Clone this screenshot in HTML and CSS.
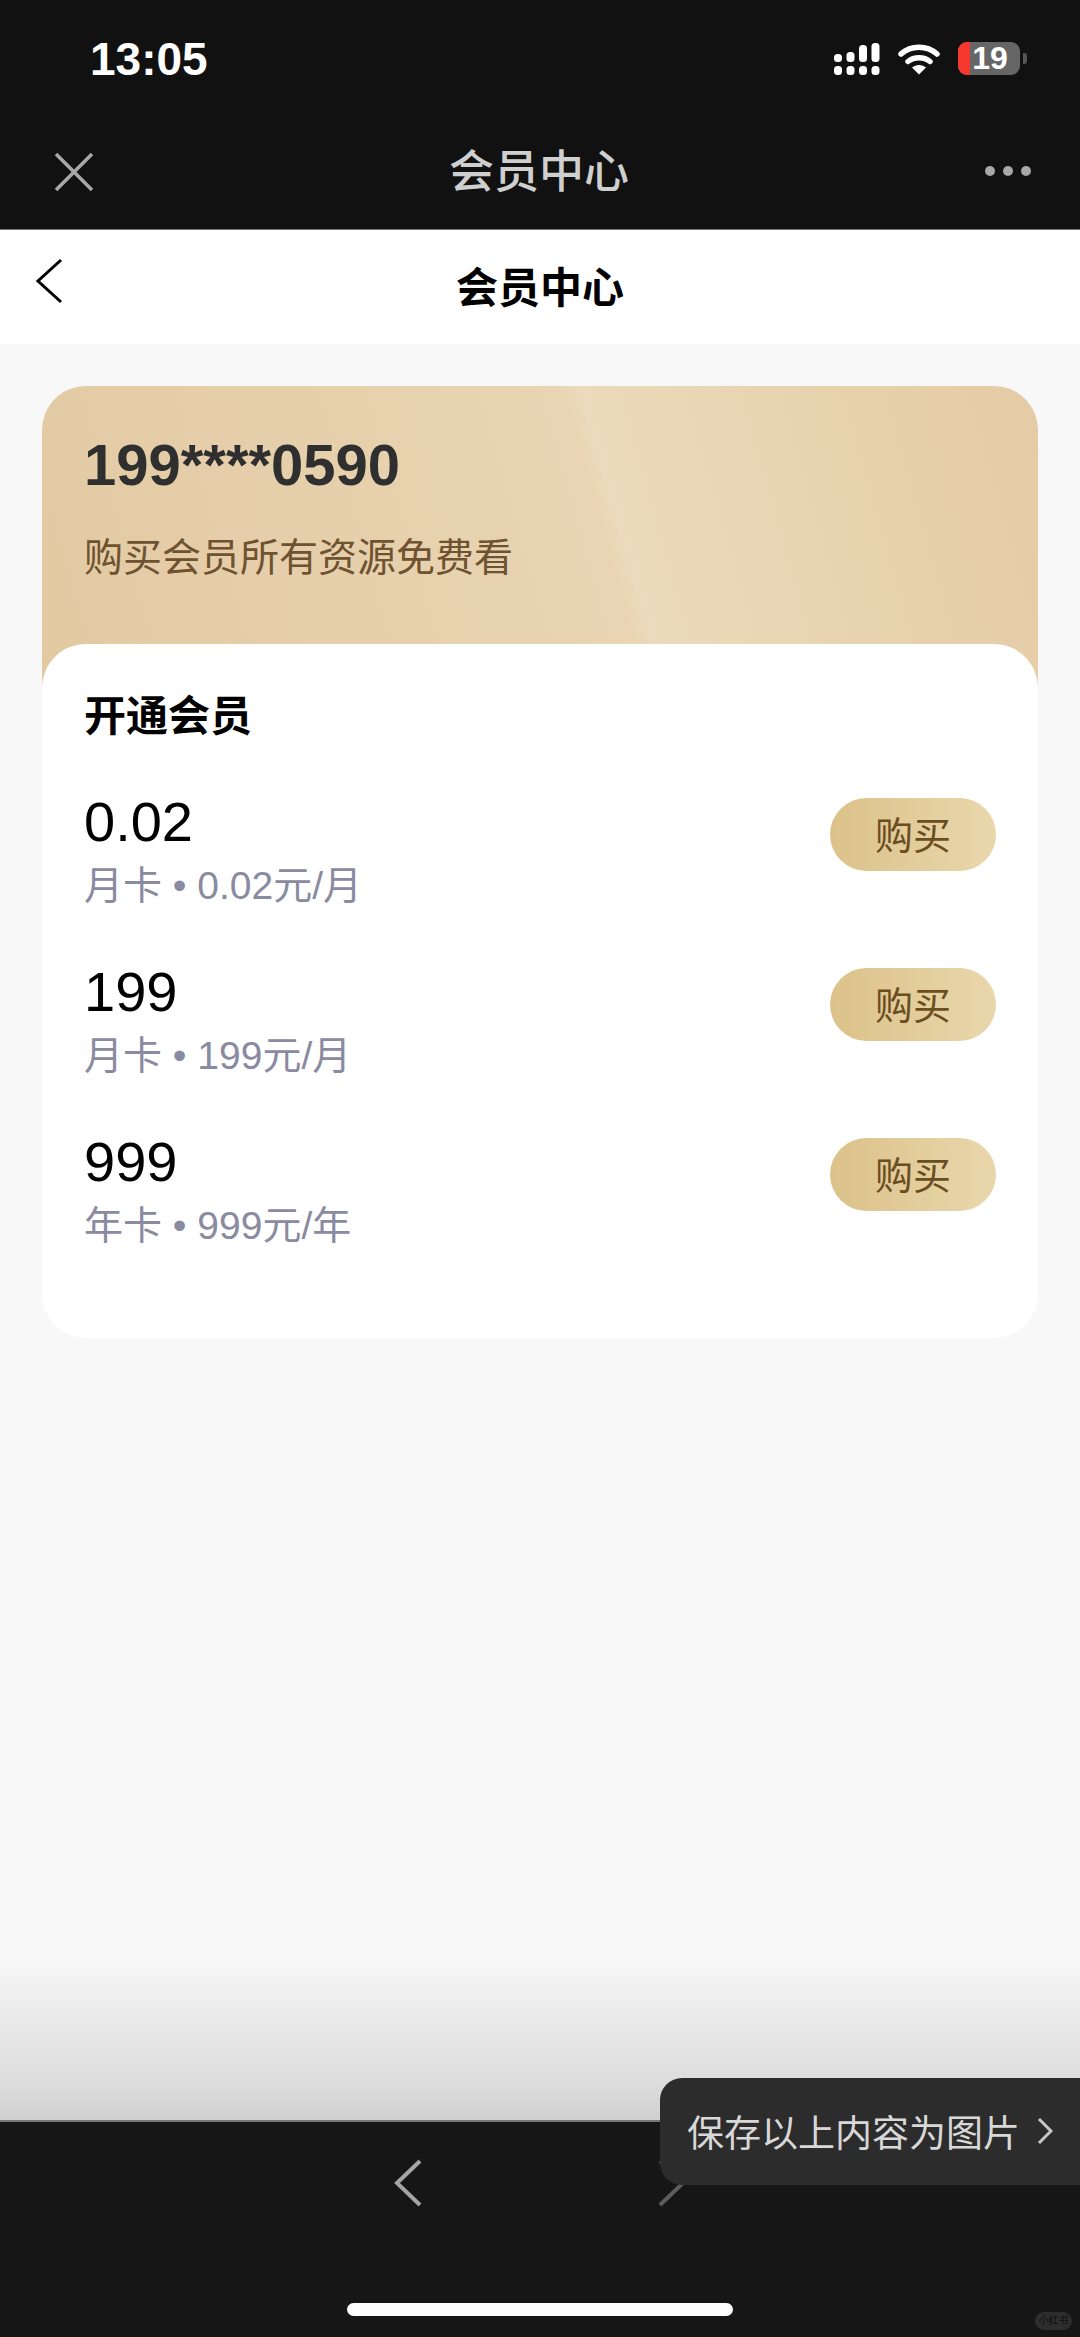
FILE: index.html
```html
<!DOCTYPE html>
<html lang="zh-CN">
   <head>
      <meta charset="UTF-8" />
      <meta name="viewport" content="width=device-width, initial-scale=1.0" />
      <title>会员中心</title>
      <link rel="stylesheet" href="styles.css">
   </head>
   <body>
      <div class="phone">
         <div class="status-bar">
            <span class="time">13:05</span>
            <div class="status-icons">
               <svg class="signal" width="46" height="34" viewBox="0 0 46 34">
                  <g fill="#fff">
                     <rect x="0" y="12" width="8" height="8" rx="3.5" />
                     <rect x="12.5" y="10" width="8" height="10" rx="3.5" />
                     <rect x="25" y="3" width="8" height="17" rx="3.5" />
                     <rect x="37.5" y="1" width="8" height="19" rx="3.5" />
                     <rect x="0" y="24" width="8" height="9" rx="3.5" />
                     <rect x="12.5" y="24" width="8" height="9" rx="3.5" />
                     <rect x="25" y="24" width="8" height="9" rx="3.5" />
                     <rect x="37.5" y="24" width="8" height="9" rx="3.5" />
                  </g>
               </svg>
               <svg class="wifi" width="42" height="32" viewBox="0 0 42 32">
                  <path d="M3 11 C13 2 29 2 39 11" fill="none" stroke="#fff" stroke-width="5.5" stroke-linecap="round" />
                  <path d="M10 18.5 C16 13.5 26 13.5 32 18.5" fill="none" stroke="#fff" stroke-width="5.5" stroke-linecap="round" />
                  <path d="M14 24.5 C18 21 24 21 28 24.5 L21 31.5 Z" fill="#fff" />
               </svg>
               <div class="battery">
                  <div class="battery-level"></div>
                  <span class="battery-num">19</span>
               </div>
               <div class="battery-tip"></div>
            </div>
         </div>

         <header class="app-bar">
            <svg class="icon-close" width="40" height="40" viewBox="0 0 40 40">
               <path d="M2 2 L38 38 M38 2 L2 38" stroke="#a8a8a8" stroke-width="3.5" fill="none" />
            </svg>
            <h1 class="app-title">会员中心</h1>
            <div class="more"><i></i><i></i><i></i></div>
         </header>

         <nav class="page-nav">
            <svg class="icon-back" width="30" height="46" viewBox="0 0 30 46">
               <path d="M27 2 L4 23 L27 44" stroke="#000" stroke-width="3" fill="none" />
            </svg>
            <h2 class="page-title">会员中心</h2>
         </nav>

         <main class="content">
            <section class="member-card">
               <div class="hero">
                  <div class="phone-num">199****0590</div>
                  <p class="hero-sub">购买会员所有资源免费看</p>
               </div>
               <div class="panel">
                  <h3 class="panel-title">开通会员</h3>
                  <div class="plans">
                     <div class="plan">
                        <div>
                           <div class="price">0.02</div>
                           <div class="plan-desc">月卡 • 0.02元/月</div>
                        </div>
                        <button class="buy">购买</button>
                     </div>
                     <div class="plan">
                        <div>
                           <div class="price">199</div>
                           <div class="plan-desc">月卡 • 199元/月</div>
                        </div>
                        <button class="buy">购买</button>
                     </div>
                     <div class="plan">
                        <div>
                           <div class="price">999</div>
                           <div class="plan-desc">年卡 • 999元/年</div>
                        </div>
                        <button class="buy">购买</button>
                     </div>
                  </div>
               </div>
            </section>
         </main>

         <footer class="bottom-bar">
            <svg class="arrow-prev" width="30" height="48" viewBox="0 0 30 48">
               <path d="M27 2 L4 24 L27 46" stroke="#a4a4a4" stroke-width="4" fill="none" />
            </svg>
            <svg class="arrow-next" width="30" height="48" viewBox="0 0 30 48">
               <path d="M3 2 L26 24 L3 46" stroke="#5c5c5c" stroke-width="4" fill="none" />
            </svg>
            <div class="home-bar"></div>
         </footer>

         <!-- save tip sits on top of the bottom bar -->
         <div class="save-tip">
            <span>保存以上内容为图片</span>
            <svg width="16" height="28" viewBox="0 0 16 28">
               <path d="M2 2 L14 14 L2 26" stroke="#c8c8c8" stroke-width="3" fill="none" />
            </svg>
         </div>
         <div class="badge">小红书</div>
      </div>
   </body>
</html>
```

FILE: styles.css
```css
* {
   box-sizing: border-box;
}

body {
   margin: 0;
   padding: 0;
   font-family: 'Liberation Sans', 'Noto Sans CJK SC', sans-serif;
}

h1,
h2,
h3,
p {
   margin: 0;
}

.phone {
   position: relative;
   width: 1080px;
   height: 2337px;
   display: flex;
   flex-direction: column;
   overflow: hidden;
   background-color: #f8f8f8;
}

/* status bar */
.status-bar {
   height: 118px;
   flex-shrink: 0;
   padding: 33px 53px 0 90px;
   display: flex;
   justify-content: space-between;
   align-items: flex-start;
   background-color: #111;
}

.time {
   font-size: 46px;
   line-height: 52px;
   font-weight: bold;
   color: #fff;
}

.status-icons {
   display: flex;
   align-items: flex-start;
   margin-top: 9px;
}

.wifi {
   margin-left: 18px;
   margin-top: 1px;
}

.battery {
   position: relative;
   width: 62px;
   height: 33px;
   margin-left: 18px;
   border-radius: 9px;
   background-color: #666;
   display: flex;
   justify-content: center;
   align-items: center;
}

.battery-level {
   position: absolute;
   left: 0;
   top: 0;
   bottom: 0;
   width: 12px;
   border-radius: 9px 0 0 9px;
   background-color: #f5382f;
}

.battery-num {
   position: relative;
   margin-left: 2px;
   font-size: 32px;
   line-height: 33px;
   font-weight: bold;
   color: #fff;
}

.battery-tip {
   width: 4px;
   height: 11px;
   margin: 11px 0 0 3px;
   border-radius: 0 3px 3px 0;
   background-color: #555;
}

/* dark app bar */
.app-bar {
   height: 112px;
   flex-shrink: 0;
   padding: 34px 50px 0 54px;
   display: flex;
   justify-content: space-between;
   align-items: flex-start;
   background-color: #111;
   border-bottom: 1px solid #777;
}

.app-title {
   margin-top: -4px;
   font-size: 45px;
   line-height: 50px;
   font-weight: 500;
   color: #cfcfcf;
}

.more {
   display: flex;
   gap: 8px;
   margin: 14px 0 0;
   transform: translateX(1px);
}

.more i {
   width: 10px;
   height: 10px;
   border-radius: 50%;
   background-color: #a8a8a8;
}

/* white title row */
.page-nav {
   position: relative;
   height: 114px;
   flex-shrink: 0;
   padding-top: 4px;
   display: flex;
   justify-content: center;
   align-items: center;
   background-color: #fff;
}

.icon-back {
   position: absolute;
   left: 34px;
   top: 28px;
}

.page-title {
   font-size: 42px;
   line-height: 50px;
   font-weight: bold;
   color: #000;
}

/* page content */
.content {
   flex: 1;
   padding: 42px 42px 0;
   background: linear-gradient(#f8f8f8 1610px, #eaeaea 1676px, #dcdcdc 1742px, #cfcfcf 1776px);
}

.member-card {
   width: 996px;
}

.hero {
   height: 302px;
   padding: 47px 0 0 42px;
   border-radius: 44px 44px 0 0;
   background: linear-gradient(74deg, #e2c9a2 0, #e9d5b3 56%, #ebdabb 57.5%, #e8d4b1 74%, #e4cba5 100%);
}

.phone-num {
   font-size: 58px;
   line-height: 64px;
   font-weight: bold;
   color: #2f2f2f;
}

.hero-sub {
   margin-top: 36px;
   font-size: 39px;
   line-height: 50px;
   color: #6f5230;
}

.panel {
   position: relative;
   margin-top: -44px;
   height: 694px;
   padding: 48px 42px 0;
   border-radius: 44px;
   background-color: #fff;
}

.panel-title {
   font-size: 42px;
   line-height: 50px;
   font-weight: bold;
   color: #000;
}

.plans {
   margin-top: 48px;
   display: flex;
   flex-direction: column;
   gap: 49px;
}

.plan {
   display: flex;
   justify-content: space-between;
   align-items: flex-start;
}

.price {
   font-size: 56px;
   line-height: 64px;
   color: #000;
}

.plan-desc {
   margin-top: 7px;
   font-size: 39px;
   line-height: 50px;
   color: #8a8aa0;
}

button.buy {
   width: 166px;
   height: 73px;
   margin: 8px 0 0;
   padding: 0 0 5px;
   border: none;
   border-radius: 37px;
   background: linear-gradient(90deg, #dcc28a, #e9d7ac);
   font-family: inherit;
   font-size: 38px;
   color: #6b4e20;
}

/* bottom bar */
.bottom-bar {
   position: relative;
   height: 217px;
   flex-shrink: 0;
   background-color: #161616;
   border-top: 2px solid #777;
}

.arrow-prev {
   position: absolute;
   left: 393px;
   top: 37px;
}

.arrow-next {
   position: absolute;
   left: 657px;
   top: 37px;
}

.home-bar {
   position: absolute;
   left: 347px;
   top: 181px;
   width: 386px;
   height: 13px;
   border-radius: 7px;
   background-color: #fff;
}

.save-tip {
   position: absolute;
   left: 660px;
   right: 0;
   top: 2078px;
   height: 107px;
   padding: 0 0 2px 27px;
   display: flex;
   align-items: center;
   gap: 17px;
   border-radius: 22px 0 0 22px;
   background-color: #2c2c2c;
   font-size: 37px;
   color: #d8d8d8;
}

.badge {
   position: absolute;
   right: 8px;
   bottom: 7px;
   width: 37px;
   height: 18px;
   display: flex;
   justify-content: center;
   align-items: center;
   border-radius: 9px;
   background-color: #2d2d2d;
   font-size: 10px;
   line-height: 18px;
   color: #101010;
}
```
